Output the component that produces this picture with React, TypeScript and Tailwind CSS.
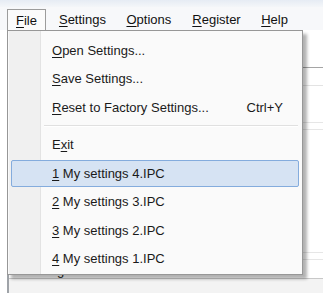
import React from "react";

const U = ({ c }: { c: string }) => <span className="underline underline-offset-[2px] decoration-[1px]">{c}</span>;

const Row = ({ pre, k, post, shortcut, hi }: { pre?: string; k: string; post: string; shortcut?: string; hi?: boolean }) => (
  <div className="h-[28.5px] px-[3px] flex items-center">
    <div
      className={
        "h-[27px] w-full flex items-center rounded-[2px] border " +
        (hi ? "border-[#84acdd] bg-[#d6e3f3]" : "border-transparent")
      }
    >
      <span className="pl-[40px] flex-1 text-[13px] text-[#1a1a1a] whitespace-nowrap">
        {pre}
        <U c={k} />
        {post}
      </span>
      {shortcut && <span className="pr-[15px] text-[13px] text-[#1a1a1a]">{shortcut}</span>}
    </div>
  </div>
);

export default function App() {
  return (
    <div
      className="relative w-[323px] h-[293px] overflow-hidden bg-white"
      style={{ fontFamily: '"Liberation Sans", Arial, sans-serif' }}
    >
      {/* top strip */}
      <div className="h-[7px] bg-gradient-to-b from-[#e6ecf4] to-[#f4f6f9]" />
      {/* menu bar */}
      <div className="h-[23px] flex items-stretch pl-[7px] bg-[#f7f8fa] text-[13px] text-[#111]">
        <div className="relative z-20 mt-[2px] pt-[1px] px-[8px] flex items-center border border-b-0 border-[#9c9c9c] bg-[#fbfbfb]">
          <span>
            <U c="F" />
            ile
          </span>
        </div>
        <div className="w-[3px]" />
        <div className="px-[10px] pt-[3px] flex items-center">
          <span>
            <U c="S" />
            ettings
          </span>
        </div>
        <div className="px-[10.5px] pt-[3px] flex items-center">
          <span>
            <U c="O" />
            ptions
          </span>
        </div>
        <div className="px-[10.5px] pt-[3px] flex items-center">
          <span>
            <U c="R" />
            egister
          </span>
        </div>
        <div className="px-[10px] pt-[3px] flex items-center">
          <span>
            <U c="H" />
            elp
          </span>
        </div>
      </div>

      {/* background window content */}
      <div className="ml-[7px] border-l-2 border-[#9fa3a8] h-[263px] flex flex-col">
        <div className="h-[38px] border-b border-[#a5a5a5]" />
        <div className="h-[18px] border-b border-[#e3e3e3]" />
        <div className="h-[37px] border-b border-[#e6e6e6]" />
        <div className="h-[7px] border-b border-[#e6e6e6]" />
        <div className="h-[123px] border-b border-[#e6e6e6]" />
        <div className="h-[7px] border-b border-[#e6e6e6]" />
        <div className="h-[18px] pl-[30px] text-[13px] leading-[14px] text-[#222] flex items-end">Target</div>
        <div className="flex-1 bg-[#f3f3f3] border-t border-[#c8c8c8]" />
      </div>

      {/* popup menu */}
      <div className="absolute left-[7px] top-[30px] w-[296px] z-10 border border-[#979797] bg-[#fafafa] shadow-[4px_4px_3px_rgba(0,0,0,0.3)]">
        <div className="relative pt-[5px] pb-[1px]">
          {/* gutter */}
          <div className="absolute left-[1px] top-0 bottom-0 w-[32px] bg-[#f0f0f0] border-r border-[#e3e3e3]" />
          <div className="relative">
            <Row k="O" post="pen Settings..." />
            <Row k="S" post="ave Settings..." />
            <Row k="R" post="eset to Factory Settings..." shortcut="Ctrl+Y" />
            <div className="h-[9px] flex items-center pl-[36px] pr-[4px]">
              <div className="w-full h-[2px] border-t border-[#e0e0e0] border-b border-b-white" />
            </div>
            <Row pre="E" k="x" post="it" />
            <Row k="1" post=" My settings 4.IPC" hi />
            <Row k="2" post=" My settings 3.IPC" />
            <Row k="3" post=" My settings 2.IPC" />
            <Row k="4" post=" My settings 1.IPC" />
          </div>
        </div>
      </div>
    </div>
  );
}
